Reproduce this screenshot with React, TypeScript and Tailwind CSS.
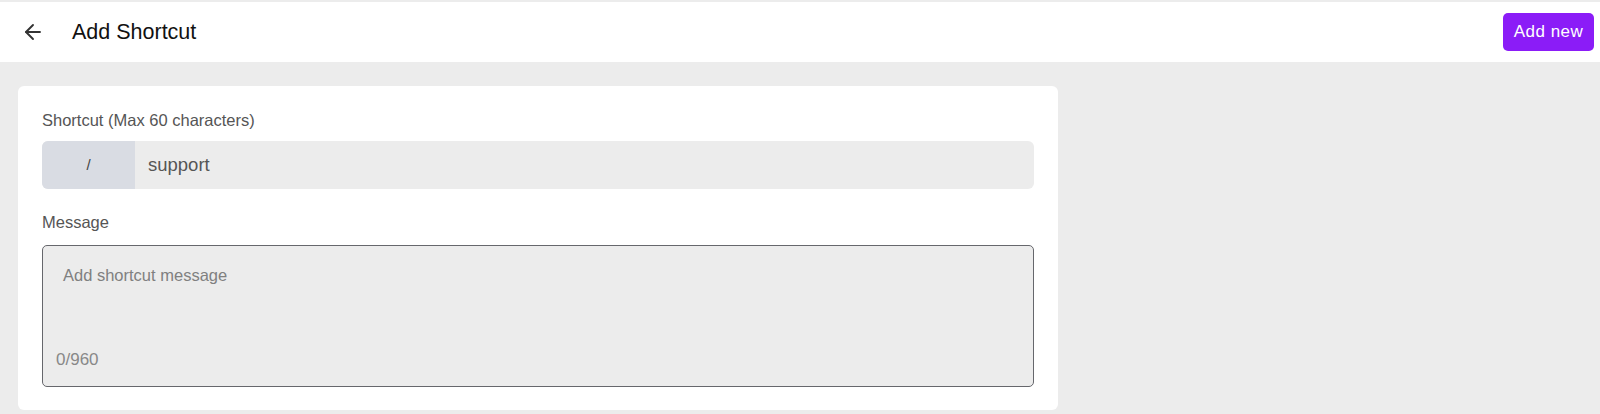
import { ArrowLeft } from "lucide-react";

const App = () => {
  return (
    <div className="h-[414px] bg-[#ececec] font-['Liberation_Sans',Arial,sans-serif] overflow-hidden">
      <div className="h-[2px] bg-[#ececec]" />
      <header className="h-[60px] bg-white flex items-center justify-between pl-[21px] pr-[6px]">
        <div className="flex items-center">
          <ArrowLeft className="w-[24px] h-[24px] text-[#333]" strokeWidth={1.9} />
          <h1 className="ml-[27px] text-[21.5px] text-[#111]">Add Shortcut</h1>
        </div>
        <button className="h-[38px] w-[91px] rounded-[5px] bg-[#8b1cf7] text-white text-[17px] tracking-[0.5px]">
          Add new
        </button>
      </header>
      <main className="px-[18px] pt-[24px]">
        <div className="w-[1040px] bg-white rounded-[6px] px-[24px] pt-[24px] pb-[23px]">
          <label className="block text-[16.5px] leading-[20px] text-[#555] mb-[11px]">
            Shortcut (Max 60 characters)
          </label>
          <div className="flex h-[48px] rounded-[6px] overflow-hidden bg-[#ececec]">
            <div className="w-[93px] bg-[#d9dce3] flex items-center justify-center text-[15px] text-[#444]">/</div>
            <div className="flex items-center pl-[13px] text-[18.5px] text-[#555]">support</div>
          </div>
          <label className="block mt-[23px] mb-[13px] text-[16.5px] leading-[20px] text-[#555]">Message</label>
          <div className="relative h-[142px] rounded-[5px] border border-[#66676c] bg-[#ececec]">
            <textarea
              placeholder="Add shortcut message"
              className="w-full h-[100px] resize-none bg-transparent outline-none pt-[17px] pl-[20px] text-[16.5px] text-[#555] placeholder:text-[#808080]"
            />
            <span className="absolute left-[13px] bottom-[14px] text-[17px] text-[#888]">0/960</span>
          </div>
        </div>
      </main>
    </div>
  );
};

export default App;
